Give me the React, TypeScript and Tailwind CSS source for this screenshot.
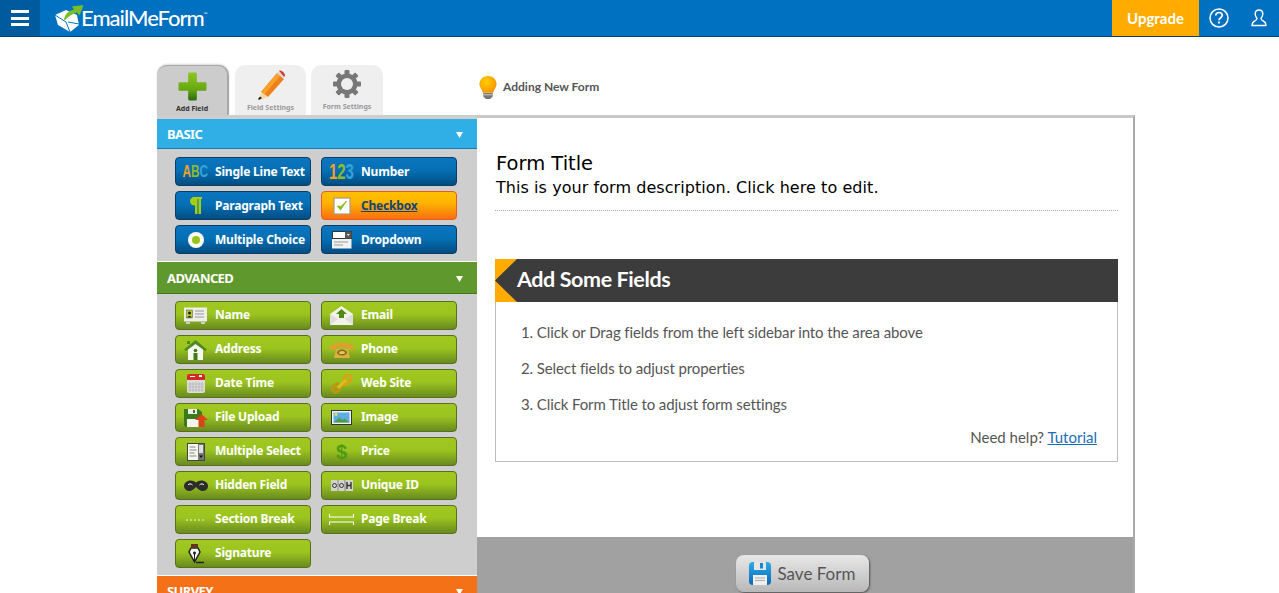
import React from "react";

const Abc = () => (
  <span className="font-['Liberation_Sans',sans-serif] font-bold text-[16px] leading-none [text-shadow:none] flex scale-x-[0.74]">
    <span className="text-[#f0a030]">A</span><span className="text-[#8dbb2a]">B</span><span className="text-[#35a5dc]">C</span>
  </span>
);
const Num = () => (
  <span className="font-['Liberation_Sans',sans-serif] font-bold text-[22px] leading-none [text-shadow:none] flex scale-x-[0.68]">
    <span className="text-[#f0a030]">1</span><span className="text-[#8dbb2a]">2</span><span className="text-[#35a5dc]">3</span>
  </span>
);
const Para = () => (
  <svg width="14" height="20" viewBox="0 0 14 20"><path d="M5 1h8v2h-1v15H9.500V3H8.500v15H6V9.500C3 9.500 1 8 1 5.300S3 1 5 1z" fill="#a5d010" /></svg>
);
const Check = () => (
  <svg width="18" height="18" viewBox="0 0 18 18"><rect x="1" y="1" width="16" height="16" fill="#fff" stroke="#a89a80" strokeWidth="1.200" /><path d="M4.500 9l3 4 6-9-5.500 5.500z" fill="#8cbc1c" stroke="#8cbc1c" /></svg>
);
const Radio = () => (
  <svg width="18" height="18" viewBox="0 0 18 18"><circle cx="9" cy="9" r="8" fill="#fbfbf5" /><circle cx="9" cy="9" r="4" fill="#9ac41a" /></svg>
);
const Drop = () => (
  <svg width="20" height="18" viewBox="0 0 20 18"><rect x="0.500" y="0.500" width="19" height="7" fill="#fff" stroke="#333" /><rect x="13" y="0.500" width="6.500" height="7" fill="#555" /><path d="M14.500 3h3.500l-1.750 2z" fill="#ddd" /><rect x="0" y="8" width="19.500" height="9.500" fill="#f2f2f2" /><path d="M2 11h14M2 14h9" stroke="#999" /></svg>
);
const NameI = () => (
  <svg width="23" height="17" viewBox="0 0 23 17"><rect x="0" y="0.500" width="23" height="14" fill="#eeeeea" /><path d="M2 15h4v2H2zM17 15h4v2h-4z" fill="#ccc" /><rect x="2.500" y="3" width="6" height="8" fill="#b6d12b" stroke="#555" strokeWidth="0.500" /><circle cx="5.500" cy="6" r="1.500" fill="#222" /><path d="M3.500 10.500c0-2 4-2 4 0z" fill="#222" /><path d="M11 4h9M11 7h9M11 10h9" stroke="#999" /></svg>
);
const Mail = () => (
  <svg width="23" height="19" viewBox="0 0 23 19"><path d="M0 8L11.500 0 23 8v11H0z" fill="#f2f2ea" /><path d="M0 8l8 5-8 6zM23 8l-8 5 8 6z" fill="#ddd" /><path d="M11.500 3l5.500 5h-3v4H9V8H6z" fill="#4e8a10" /></svg>
);
const Home = () => (
  <svg width="23" height="20" viewBox="0 0 23 20"><path d="M4 8l7.500-5L19 8v12H4z" fill="#f7f7ef" /><path d="M9.500 13h4v7h-4z" fill="#3f7a18" /><circle cx="11.500" cy="10.500" r="1.800" fill="#3f7a18" /><path d="M0 9.500L11.500 0 23 9.500 21 11 11.500 4 2 11z" fill="#4f8a20" /><path d="M3 1h3v3H3z" fill="#4f8a20" /></svg>
);
const Phone = () => (
  <svg width="24" height="18" viewBox="0 0 24 18"><path d="M0 6C2 0 22 0 24 6v3h-6V6.500H6V9H0z" fill="#d8a22c" /><path d="M4 17l2-9h12l2 9z" fill="#dfae3e" /><ellipse cx="12" cy="11.500" rx="5" ry="3" fill="#8a6a20" /><ellipse cx="12" cy="11.500" rx="3" ry="1.600" fill="#d8cc60" /></svg>
);
const Cal = () => (
  <svg width="18" height="19" viewBox="0 0 18 19"><rect x="0" y="0" width="18" height="19" rx="2" fill="#ddd" /><path d="M0 2a2 2 0 012-2h14a2 2 0 012 2v4H0z" fill="#d22a20" /><path d="M3 2h5v1H3zM12 1h3v2h-3z" fill="#fff" /><path d="M3 8v10M6 8v10M9 8v10M12 8v10M15 8v10M1 10h16M1 13h16M1 16h16" stroke="#b0b0b0" strokeWidth="0.700" /></svg>
);
const Link = () => (
  <svg width="22" height="20" viewBox="0 0 22 20" fill="none"><path d="M8 9.500C6 9 5 10 3 12c-2 2-2 3.500-1 5s3.500 1.500 5 0l3-3" stroke="#c4940e" strokeWidth="3" /><path d="M7 14l8-8" stroke="#eab820" strokeWidth="3" /><path d="M12 5l3-3c2-1.500 3.500-1 4.500 0s1 3 0 4.500l-3 3c-1.500 1.500-3 1-4 .5" stroke="#d8a414" strokeWidth="3" /></svg>
);
const Upload = () => (
  <svg width="24" height="18" viewBox="0 0 24 18"><path d="M0 0h14l4 3v15H2a2 2 0 01-2-2z" fill="#3d7a1c" /><rect x="4" y="0" width="9" height="5" fill="#eee" /><rect x="9" y="1" width="2" height="3" fill="#3d7a1c" /><rect x="3" y="10" width="12" height="8" fill="#f4f4f0" /><path d="M17.500 5L24 11h-3.500v7h-6v-7H11z" fill="#d8441a" /></svg>
);
const Img = () => (
  <svg width="21" height="15" viewBox="0 0 21 15"><rect x="0" y="0" width="21" height="15" fill="#333" /><rect x="1" y="1" width="19" height="13" fill="#f3f3f3" /><rect x="2.500" y="2.500" width="16" height="10" fill="#5cb0e0" /><circle cx="5" cy="4.500" r="1.400" fill="#f5e24a" /><path d="M2.500 12.500l6-5 3 2.500 2-1.500 5 4z" fill="#4f9a50" /></svg>
);
const MSel = () => (
  <svg width="18" height="18" viewBox="0 0 18 18"><rect x="0.500" y="0.500" width="17" height="17" fill="#f6f6f0" stroke="#444" /><rect x="11" y="1" width="6" height="16" fill="#777" /><rect x="12" y="2" width="4" height="8" fill="#ddd" /><path d="M12 12.500h4l-2 2.500z" fill="#111" /><path d="M2.500 4h6M2.500 7h7M2.500 10h5M2.500 13h7" stroke="#888" /></svg>
);
const Price = () => (
  <span className="font-['Liberation_Sans',sans-serif] font-bold text-[20px] leading-none text-[#4e9a12] [text-shadow:none]">$</span>
);
const Mask = () => (
  <svg width="24" height="12" viewBox="0 0 24 12"><path d="M4 1c3-1 6 0 8 1.500C14 1 17 0 20 1c3 1 4 3 4 5s-1.500 5-5 5c-3 0-5-2-7-4-2 2-4 4-7 4S0 8 0 6s1-4 4-5z" fill="#2c2c2c" /><path d="M4 5c1-1.500 3-1.500 4.500 0M15.500 5c1.500-1.500 3.500-1.500 4.500 0" stroke="#fff" fill="none" /></svg>
);
const Uid = () => (
  <svg width="22" height="11" viewBox="0 0 22 11"><rect x="0" y="0" width="22" height="11" fill="#d3d3cc" /><path d="M7 0v11M14 0v11" stroke="#888" /><circle cx="3.500" cy="5.500" r="2" fill="none" stroke="#333" /><circle cx="10.500" cy="5.500" r="2" fill="none" stroke="#333" /><path d="M16 2v7M20 2v7M16 5.500h4" stroke="#333" strokeWidth="1.400" /></svg>
);
const Sect = () => (
  <svg width="20" height="2" viewBox="0 0 20 2"><path d="M0 1h20" stroke="#f0f5dc" strokeDasharray="2 2" /></svg>
);
const PageB = () => (
  <svg width="25" height="11" viewBox="0 0 25 11"><path d="M0 3h25M0 8h25M.5 0v3M24.500 0v3M.5 8v3M24.500 8v3" stroke="#fff" /></svg>
);
const Pen = () => (
  <svg width="16" height="20" viewBox="0 0 16 20"><path d="M3 0h7v3H3z" fill="#6b2f1a" /><path d="M6.500 18L1 8l2-4h7l2 4z" fill="#f5f5f0" stroke="#222" strokeWidth="1.500" /><circle cx="6.500" cy="9" r="1.500" fill="#222" /><path d="M6.500 10v7" stroke="#222" /><path d="M8 18.500h8" stroke="#222" strokeWidth="1.500" /></svg>
);

type Item = { label: string; icon: React.ReactNode };

const Field = ({ item, tone }: { item: Item; tone: "blue" | "green" | "orange" }) => {
  const cls =
    tone === "blue"
      ? "border-[#0c3d62] bg-[linear-gradient(#0a76bf_0%,#0670b6_45%,#014d82_100%)] text-white"
      : tone === "green"
      ? "border-[#56701c] bg-[linear-gradient(#a0c820_0%,#9cc41f_45%,#688a20_100%)] text-white"
      : "border-[#ef5a1c] bg-[linear-gradient(#ffc000_0%,#ffb400_40%,#f86f12_100%)] text-[#0d4674] underline";
  return (
    <div className={`h-[29px] w-[136px] rounded-[4px] border flex items-center ${cls}`}>
      <span className="w-[39px] shrink-0 flex items-center justify-center">{item.icon}</span>
      <span className={`text-[12px] font-bold font-['Noto_Sans',sans-serif] whitespace-nowrap tracking-[-0.2px] ${tone === "green" ? "pb-[2px]" : ""}`}>{item.label}</span>
    </div>
  );
};

const basic: Item[] = [
  { label: "Single Line Text", icon: <Abc /> },
  { label: "Number", icon: <Num /> },
  { label: "Paragraph Text", icon: <Para /> },
  { label: "Checkbox", icon: <Check /> },
  { label: "Multiple Choice", icon: <Radio /> },
  { label: "Dropdown", icon: <Drop /> },
];
const advanced: Item[] = [
  { label: "Name", icon: <NameI /> },
  { label: "Email", icon: <Mail /> },
  { label: "Address", icon: <Home /> },
  { label: "Phone", icon: <Phone /> },
  { label: "Date Time", icon: <Cal /> },
  { label: "Web Site", icon: <Link /> },
  { label: "File Upload", icon: <Upload /> },
  { label: "Image", icon: <Img /> },
  { label: "Multiple Select", icon: <MSel /> },
  { label: "Price", icon: <Price /> },
  { label: "Hidden Field", icon: <Mask /> },
  { label: "Unique ID", icon: <Uid /> },
  { label: "Section Break", icon: <Sect /> },
  { label: "Page Break", icon: <PageB /> },
  { label: "Signature", icon: <Pen /> },
];

const SectionHead = ({ title, cls }: { title: string; cls: string }) => (
  <div className={`flex items-center justify-between pl-[10px] pr-[14px] pt-[2px] text-white font-bold text-[13px] tracking-[-0.6px] font-['Noto_Sans',sans-serif] ${cls}`}>
    <span>{title}</span>
    <svg width="7" height="6" viewBox="0 0 7 6"><path d="M0 0h7L3.500 6z" fill="#fff" /></svg>
  </div>
);

const Logo = () => (
  <svg width="29" height="28" viewBox="0 0 29 28">
    <path d="M0 11l11-5 11 5 2 10-9 7L3 21z" fill="#fff" />
    <path d="M0 11l11 7 4 10M24 20l-11-2" stroke="#0070c0" strokeWidth="1" fill="none" />
    <path d="M9 17C9 11 13 7 19 5.500L17 2.500 28.500 1 24.500 11.500 22 8.500C17 10 13 12.500 9 17z" fill="#76c026" />
  </svg>
);

export default function App() {
  return (
    <div className="h-[593px] w-[1279px] overflow-hidden bg-white flex flex-col font-['Lato',sans-serif]">
      <header className="h-[37px] shrink-0 bg-[#0070c0] border-b border-[#0a3f6b] flex items-stretch">
        <div className="w-[40px] bg-[#005a9e] flex flex-col items-center justify-center gap-[3.500px]">
          <span className="w-[18px] h-[3px] bg-white" />
          <span className="w-[18px] h-[3px] bg-white" />
          <span className="w-[18px] h-[3px] bg-white" />
        </div>
        <div className="ml-[15px] flex items-center">
          <Logo />
          <span className="ml-[-3px] text-white text-[22px] font-medium tracking-[-1px] leading-none">EmailMeForm</span>
          <span className="text-white text-[5px] self-start mt-[11px]">™</span>
        </div>
        <div className="ml-auto w-[87px] bg-[#ffab00] text-white font-bold text-[15px] flex items-center justify-center">Upgrade</div>
        <div className="w-[40px] flex items-center justify-center">
          <svg width="20" height="20" viewBox="0 0 20 20" fill="none" stroke="#fff"><circle cx="10" cy="10" r="9" strokeWidth="1.500" /><path d="M6.800 7.500C7 5.300 8.500 4.500 10 4.500c2 0 3.300 1.200 3.300 2.800 0 2.400-3.300 2.500-3.300 5" strokeWidth="1.700" /><path d="M10 13.500v2" strokeWidth="1.800" /></svg>
        </div>
        <div className="w-[40px] flex items-center justify-center">
          <svg width="16" height="18" viewBox="0 0 16 18" fill="none" stroke="#fff" strokeWidth="1.400"><path d="M8 1c2.500 0 3.800 1.800 3.800 4 0 2-1 3.400-1.800 4.500 0 1.500 1 2 3 3 1.500.7 2 2 2 4H1c0-2 .5-3.300 2-4 2-1 3-1.500 3-3C5.200 8.400 4.200 7 4.200 5c0-2.200 1.300-4 3.800-4z" /></svg>
        </div>
      </header>

      <div className="ml-[157px] w-[978px] mt-[28px] flex-1 min-h-0 flex flex-col">
        <div className="h-[50px] shrink-0 flex items-end relative">
          <div className="w-[72px] h-[50px] rounded-t-[10px] bg-[#cccccc] border-t border-r-2 border-[#a8a8a8] shadow-[0_-1px_2px_rgba(0,0,0,0.15)] flex flex-col items-center pt-[6px]">
            <svg width="29" height="29" viewBox="0 0 30 30">
              <defs><linearGradient id="g" x1="0" x2="0" y1="0" y2="1"><stop offset="0" stopColor="#8cc81e" /><stop offset="0.6" stopColor="#68a814" /><stop offset="1" stopColor="#2c6a10" /></linearGradient></defs>
              <path d="M10.500 2a1.500 1.500 0 011.500-1.500h6A1.500 1.500 0 0119.500 2v8.500H28a1.500 1.500 0 011.500 1.500v6a1.500 1.500 0 01-1.500 1.500h-8.500V28a1.500 1.500 0 01-1.500 1.500h-6a1.500 1.500 0 01-1.500-1.500v-8.500H2A1.500 1.500 0 01.500 18v-6A1.500 1.500 0 012 10.500h8.500z" fill="url(#g)" />
            </svg>
            <span className="text-[7px] font-bold text-[#333] font-['Noto_Sans',sans-serif] leading-none mt-[4px]">Add Field</span>
          </div>
          <div className="ml-[6px] w-[71px] h-[50px] rounded-t-[10px] bg-[#efefef] flex flex-col items-center pt-[5px]">
            <svg width="30" height="31" viewBox="0 0 30 31">
              <path d="M5 22L21 3l7 6-16 18z" fill="#f08018" />
              <path d="M8 25L24 6l-3-3L5 22z" fill="#f8a030" />
              <path d="M21 3l2-2 6 5-1.500 3z" fill="#d8d8d8" />
              <path d="M23 .8c2-1 6 2 6 5l-1 1z" fill="#d43a20" />
              <path d="M5 22l7 5-8 3z" fill="#f4d8a8" />
              <path d="M2 29l2-2.500 2 1.500-3 2z" fill="#222" />
            </svg>
            <span className="text-[7px] font-bold text-[#999] font-['Noto_Sans',sans-serif] leading-none mt-[3px]">Field Settings</span>
          </div>
          <div className="ml-[5px] w-[72px] h-[50px] rounded-t-[10px] bg-[#efefef] flex flex-col items-center pt-[5px]">
            <svg width="28" height="28" viewBox="0 0 28 28">
              <g fill="#777">
                <circle cx="14" cy="14" r="10.500" />
                <rect x="11.500" y="0" width="5" height="28" rx="1" />
                <rect x="11.500" y="0" width="5" height="28" rx="1" transform="rotate(45 14 14)" />
                <rect x="11.500" y="0" width="5" height="28" rx="1" transform="rotate(90 14 14)" />
                <rect x="11.500" y="0" width="5" height="28" rx="1" transform="rotate(135 14 14)" />
              </g>
              <circle cx="14" cy="14" r="6" fill="#efefef" />
            </svg>
            <span className="text-[7px] font-bold text-[#999] font-['Noto_Sans',sans-serif] leading-none mt-[5px]">Form Settings</span>
          </div>
          <div className="absolute left-[322px] top-[10px] flex items-center gap-[6px]">
            <svg width="18" height="25" viewBox="0 0 21 27">
              <defs><radialGradient id="b" cx="0.400" cy="0.350" r="0.700"><stop offset="0" stopColor="#ffd000" /><stop offset="1" stopColor="#f89000" /></radialGradient></defs>
              <path d="M10.500 0C16 0 20.500 4 20.500 9.500c0 4-3 6-4 10h-12c-1-4-4-6-4-10C.5 4 5 0 10.500 0z" fill="url(#b)" />
              <path d="M5 20h11v4l-3 3H8l-3-3z" fill="#777" />
              <path d="M5 22h11" stroke="#ddd" />
            </svg>
            <span className="text-[12px] font-bold text-[#555] pb-[2px]">Adding New Form</span>
          </div>
        </div>

        <div className="flex flex-1 min-h-0 overflow-hidden">
          <aside className="w-[320px] shrink-0 bg-[#cecece] border-t-[4px] border-[#cecece]">
            <SectionHead title="BASIC" cls="h-[30px] bg-[#30aee6] border-b border-[#1b79b8]" />
            <div className="grid grid-cols-[136px_136px] auto-rows-[29px] content-start gap-x-[10px] gap-y-[5px] pl-[18px] pt-[8px] h-[112px]">
              {basic.map((it) => (
                <Field key={it.label} item={it} tone={it.label === "Checkbox" ? "orange" : "blue"} />
              ))}
            </div>
            <div className="h-px bg-white" />
            <SectionHead title="ADVANCED" cls="h-[32px] bg-[#5f982c] border-b border-[#47771f]" />
            <div className="grid grid-cols-[136px_136px] auto-rows-[29px] content-start gap-x-[10px] gap-y-[5px] pl-[18px] pt-[7px] h-[281px]">
              {advanced.map((it) => (
                <Field key={it.label} item={it} tone="green" />
              ))}
            </div>
            <div className="h-px bg-white" />
            <SectionHead title="SURVEY" cls="h-[30px] bg-[#f57118]" />
          </aside>

          <main className="flex-1 min-w-0 flex flex-col border-t-[3px] border-t-[#c8c8c8] border-r-2 border-r-[#a9a9a9]">
            <div className="h-[419px] shrink-0 bg-white pl-[18px] pr-[15px] pt-[33px]">
              <div className="pl-px font-['DejaVu_Sans',sans-serif] text-[19.500px] leading-[26px] text-black">Form Title</div>
              <div className="pl-px font-['DejaVu_Sans',sans-serif] text-[16px] leading-[22px] text-black tracking-[0.06px] pb-[11px] border-b border-dotted border-[#aaaaaa]">
                This is your form description. Click here to edit.
              </div>
              <div className="mt-[48px] h-[43px] bg-[#3c3c3c] flex items-center">
                <svg className="w-[22px] h-[43px] shrink-0" viewBox="0 0 22 43"><path d="M0 0h22L0 21.500 22 43H0z" fill="#ffab00" /></svg>
                <span className="text-white font-bold text-[21.500px] tracking-[-0.4px] pb-[2px]">Add Some Fields</span>
              </div>
              <div className="h-[160px] border border-t-0 border-[#bdbdbd] pl-[25px] pr-[20px] pt-[20px] text-[15px] text-[#555]">
                <div className="leading-[20px] tracking-[-0.1px]">1. Click or Drag fields from the left sidebar into the area above</div>
                <div className="leading-[20px] tracking-[-0.1px] mt-[16px]">2. Select fields to adjust properties</div>
                <div className="leading-[20px] tracking-[-0.1px] mt-[16px]">3. Click Form Title to adjust form settings</div>
                <div className="leading-[20px] mt-[13px] text-right">Need help? <span className="text-[#1c6cb8] underline">Tutorial</span></div>
              </div>
            </div>
            <div className="flex-1 bg-[#a1a1a1] flex justify-center pt-[18px] pr-[6px]">
              <div className="h-[37px] w-[133px] rounded-[8px] bg-[linear-gradient(#e8e8e8,#b8b8b8)] shadow-[1px_1px_2px_rgba(0,0,0,0.5)] flex items-center pl-[13px] gap-[7px]">
                <svg width="22" height="23" viewBox="0 0 22 23">
                  <defs><linearGradient id="s" x1="0" x2="0" y1="0" y2="1"><stop offset="0" stopColor="#2eaae6" /><stop offset="1" stopColor="#0a68b8" /></linearGradient></defs>
                  <rect width="22" height="23" rx="4" fill="url(#s)" />
                  <rect x="5" y="0" width="12" height="8" fill="#e6e6e6" />
                  <rect x="11" y="1" width="3" height="5.500" fill="#1a88cc" />
                  <rect x="4" y="13" width="14" height="10" fill="#efefef" />
                  <path d="M6 16h10M6 18.500h10" stroke="#aaa" />
                </svg>
                <span className="text-[17px] text-[#555]">Save Form</span>
              </div>
            </div>
          </main>
        </div>
      </div>
    </div>
  );
}
